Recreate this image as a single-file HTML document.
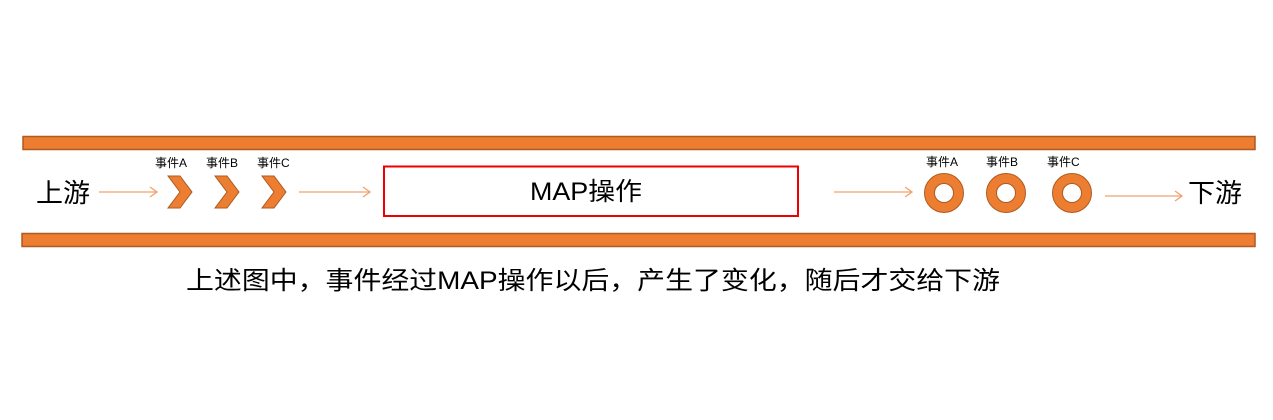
<!DOCTYPE html>
<html><head><meta charset="utf-8"><style>
html,body{margin:0;padding:0;background:#fff;width:1273px;height:420px;overflow:hidden}
svg text{font-family:"Liberation Sans","Noto Sans CJK SC",sans-serif;fill:#000}
</style></head><body>
<svg width="1273" height="420" viewBox="0 0 1273 420" xmlns="http://www.w3.org/2000/svg">
<rect x="23" y="136.5" width="1232" height="13" fill="#ed7d31" stroke="#ae5a21" stroke-width="1.5"/>
<rect x="22" y="233.5" width="1233" height="13" fill="#ed7d31" stroke="#ae5a21" stroke-width="1.5"/>
<text x="36" y="202" font-size="26" textLength="54" lengthAdjust="spacingAndGlyphs">上游</text>
<text x="1188" y="202" font-size="26" textLength="54" lengthAdjust="spacingAndGlyphs">下游</text>
<g stroke="#f4a070" stroke-width="1.3" fill="none">
<path d="M99 192H157M150 187L157 192L150 197"/>
<path d="M299 192H370M363 187L370 192L363 197"/>
<path d="M834 192H912M905 187L912 192L905 197"/>
<path d="M1105 196H1182M1175 191L1182 196L1175 201"/>
</g>
<g font-size="12">
<text x="155" y="167">事件A</text><text x="206" y="167">事件B</text><text x="257" y="167">事件C</text>
<text x="926" y="166">事件A</text><text x="986" y="166">事件B</text><text x="1047" y="166">事件C</text>
</g>
<g fill="#ed7d31" stroke="#ae5a21" stroke-width="1">
<path d="M168 176H180L192 192L180 208H168L180 192Z"/>
<path d="M215 176H227L239 192L227 208H215L227 192Z"/>
<path d="M262 176H274L286 192L274 208H262L274 192Z"/>
</g>
<g fill="none" stroke="#ed7d31" stroke-width="10">
<circle cx="944" cy="193" r="14.5"/><circle cx="1006" cy="193" r="14.5"/><circle cx="1072" cy="193" r="14.5"/>
</g>
<g fill="none" stroke="#ae5a21" stroke-width="1">
<circle cx="944" cy="193" r="19.5"/><circle cx="1006" cy="193" r="19.5"/><circle cx="1072" cy="193" r="19.5"/>
<circle cx="944" cy="193" r="9.5"/><circle cx="1006" cy="193" r="9.5"/><circle cx="1072" cy="193" r="9.5"/>
</g>
<rect x="384" y="166.5" width="414" height="49.5" fill="none" stroke="#e00" stroke-width="2"/>
<text x="530" y="200" font-size="25" textLength="112" lengthAdjust="spacingAndGlyphs">MAP操作</text>
<text x="186" y="289" font-size="25" textLength="814" lengthAdjust="spacingAndGlyphs">上述图中，事件经过MAP操作以后，产生了变化，随后才交给下游</text>
</svg>
</body></html>
